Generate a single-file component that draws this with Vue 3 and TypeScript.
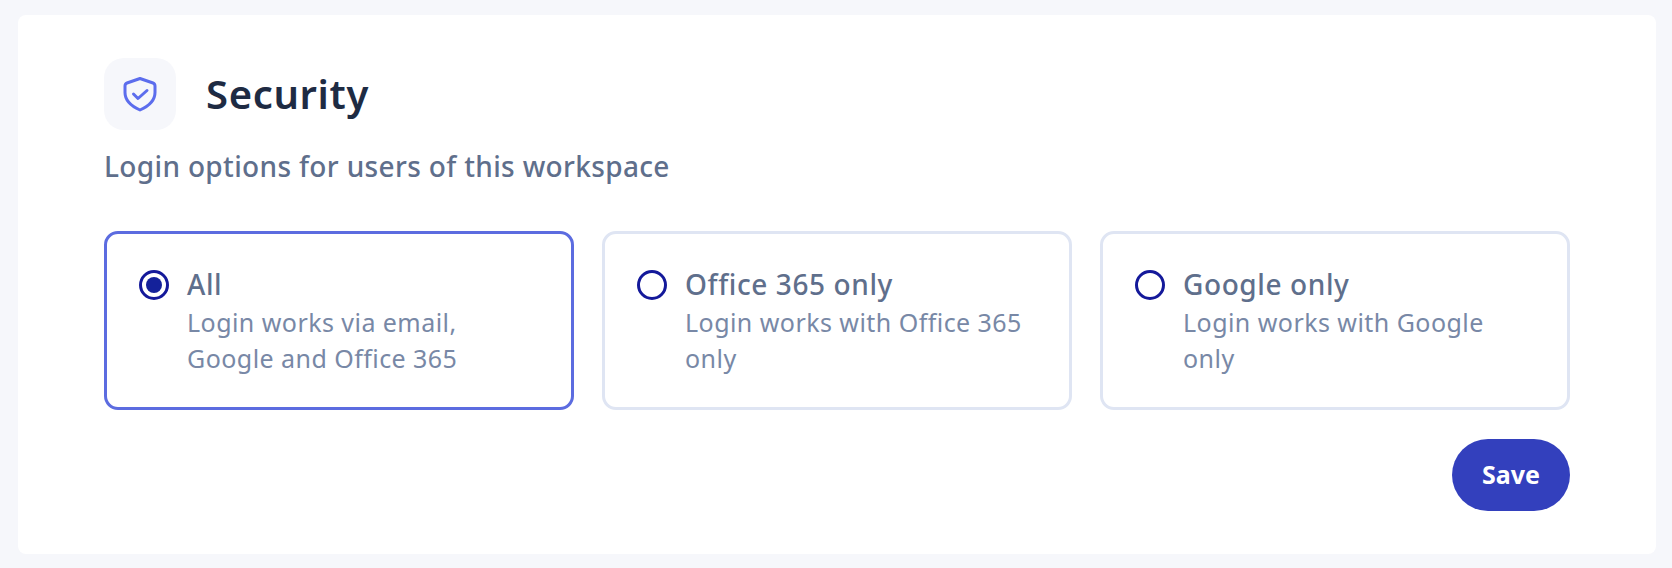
<script setup lang="ts">
import { ref } from 'vue'

interface LoginOption {
  id: string
  title: string
  desc: string
}

const options: LoginOption[] = [
  { id: 'all', title: 'All', desc: 'Login works via email, Google and Office 365' },
  { id: 'office', title: 'Office 365 only', desc: 'Login works with Office 365 only' },
  { id: 'google', title: 'Google only', desc: 'Login works with Google only' },
]

const selected = ref('all')
</script>

<template>
  <div class="page">
    <section class="card">
      <header class="head">
        <span class="icon-box">
          <svg width="36" height="36" viewBox="0 0 36 36" fill="none" stroke="#5c6ded" stroke-width="3" stroke-linecap="round" stroke-linejoin="round">
            <path d="M18 2.5 L31 7 Q33 7.8 33 10 V16.5 C33 24 27 30 18 34 C9 30 3 24 3 16.5 V10 Q3 7.8 5 7 Z" />
            <path d="M11.5 18 L16 22.5 L25 14.5" />
          </svg>
        </span>
        <h2 class="title">Security</h2>
      </header>
      <p class="sub">Login options for users of this workspace</p>

      <div class="options">
        <label
          v-for="o in options"
          :key="o.id"
          class="option"
          :class="{ active: selected === o.id }"
          @click="selected = o.id"
        >
          <span class="radio"><span v-if="selected === o.id" class="dot"></span></span>
          <span class="text">
            <span class="opt-title">{{ o.title }}</span>
            <span class="opt-desc">{{ o.desc }}</span>
          </span>
        </label>
      </div>

      <div class="actions">
        <button class="save" type="button">Save</button>
      </div>
    </section>
  </div>
</template>

<style>
html, body { background: #f6f7fb; }
</style>

<style scoped>
.page {
  height: 568px;
  box-sizing: border-box;
  padding: 15px 16px 14px 18px;
  background: #f6f7fb;
  font-family: "Noto Sans", "Open Sans", sans-serif;
}
.card {
  height: 539px;
  box-sizing: border-box;
  background: #fff;
  border-radius: 8px;
  padding: 43px 86px 0 86px;
}
.head { display: flex; align-items: center; gap: 30px; }
.icon-box {
  width: 72px;
  height: 72px;
  border-radius: 20px;
  background: #f6f7fb;
  display: flex;
  align-items: center;
  justify-content: center;
}
.title { margin: 0; font-size: 40px; font-weight: 600; line-height: 48px; color: #1e2b43; letter-spacing: 0.65px; }
.sub { margin: 18px 0 0; font-size: 28px; line-height: 36px; font-weight: 500; color: #5f6f8c; letter-spacing: 0.35px; }
.options { display: flex; gap: 28px; margin-top: 47px; }
.option {
  width: 470px;
  height: 179px;
  box-sizing: border-box;
  border: 3px solid #dfe5f3;
  border-radius: 14px;
  padding: 34px 30px 0 32px;
  display: flex;
  gap: 18px;
  cursor: pointer;
}
.option.active { border-color: #5c6ce0; }
.radio {
  width: 30px;
  height: 30px;
  margin-top: 2px;
  box-sizing: border-box;
  border: 3px solid #14199a;
  border-radius: 50%;
  flex-shrink: 0;
  display: flex;
  align-items: center;
  justify-content: center;
  background: #fff;
}
.dot { width: 16px; height: 16px; border-radius: 50%; background: #14219a; }
.text { display: flex; flex-direction: column; }
.opt-title { font-size: 28px; line-height: 32px; font-weight: 500; color: #5f6f8c; letter-spacing: 0.6px; }
.opt-desc { margin-top: 4px; font-size: 25px; line-height: 36px; color: #7888a6; letter-spacing: 0.45px; }
.actions { display: flex; justify-content: flex-end; margin-top: 29px; }
.save {
  width: 118px;
  height: 72px;
  padding: 0 0 2px;
  border: 0;
  border-radius: 36px;
  background: #3340bd;
  color: #fff;
  font-family: inherit;
  font-size: 25px;
  font-weight: 700;
  cursor: pointer;
}
</style>
